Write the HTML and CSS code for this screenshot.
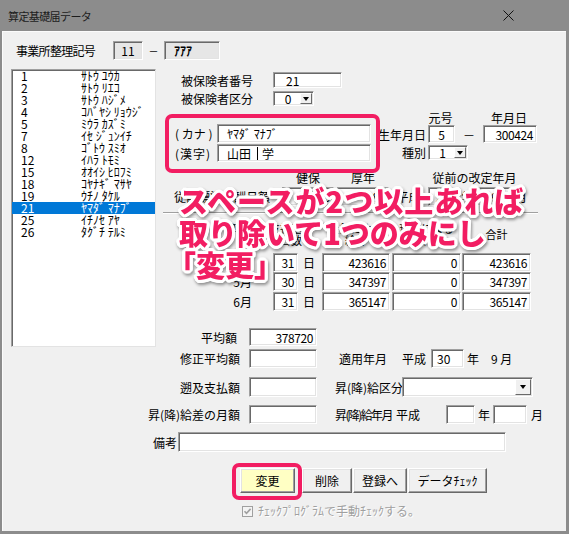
FILE: index.html
```html
<!DOCTYPE html>
<html lang="ja">
<head>
<meta charset="utf-8">
<title>算定基礎届データ</title>
<link rel="stylesheet" href="styles.css">
</head>
<body>
<div class="window">
  <div class="titlebar">
    <span class="title">算定基礎届データ</span>
    <svg class="close" width="11" height="11" viewBox="0 0 11 11"><path d="M0.5 0.5L10.5 10.5M10.5 0.5L0.5 10.5" stroke="#111" stroke-width="1" fill="none"/></svg>
  </div>
  <div class="client">
    <div class="row hdr">
      <span class="lbl hdr-label">事業所整理記号</span>
      <span class="box ro w30 cen">11</span>
      <span class="lbl cen hdr-dash">－</span>
      <span class="box ro w56 bold pl9">ｱｱｱ</span>
    </div>

    <div class="row mid">
      <div class="list">
        <div class="li"><span class="li-no">1</span><span>ｻﾄｳ ﾕｳｶ</span></div>
        <div class="li"><span class="li-no">2</span><span>ｻﾄｳ ﾘｴｺ</span></div>
        <div class="li"><span class="li-no">3</span><span>ｻﾄｳ ﾊｼﾞﾒ</span></div>
        <div class="li"><span class="li-no">4</span><span>ｺﾊﾞﾔｼ ﾘｮｳｼﾞ</span></div>
        <div class="li"><span class="li-no">5</span><span>ﾐｳﾗ ｶｽﾞﾐ</span></div>
        <div class="li"><span class="li-no">7</span><span>ｲｾ ｼﾞｭﾝｲﾁ</span></div>
        <div class="li"><span class="li-no">8</span><span>ｺﾞﾄｳ ｽﾐｵ</span></div>
        <div class="li"><span class="li-no">12</span><span>ｲﾊﾗ ﾄﾓﾐ</span></div>
        <div class="li"><span class="li-no">15</span><span>ｵｵｲｼ ﾋﾛﾌﾐ</span></div>
        <div class="li"><span class="li-no">18</span><span>ｺﾔﾅｷﾞ ﾏｻﾔ</span></div>
        <div class="li"><span class="li-no">19</span><span>ｳﾁﾉ ﾀｹﾙ</span></div>
        <div class="li sel"><span class="li-no">21</span><span>ﾔﾏﾀﾞ ﾏﾅﾌﾞ</span></div>
        <div class="li"><span class="li-no">25</span><span>ｲﾁﾉｾ ｱﾔ</span></div>
        <div class="li"><span class="li-no">26</span><span>ﾀｸﾞﾁ ﾃﾙﾐ</span></div>
      </div>

      <div class="rcol">
        <div class="row r1">
          <span class="lbl r-lbl">被保険者番号</span>
          <span class="box w69 pl12">21</span>
        </div>
        <div class="row r2">
          <span class="lbl r-lbl">被保険者区分</span>
          <span class="combo w41"><span class="combo-val">0</span><span class="combo-btn"><span class="tri"></span></span></span>
        </div>

        <div class="row r3">
          <div class="kana">
            <div class="row kana-row">
              <span class="lbl kana-lbl">( カナ )</span>
              <span class="box w154 pl9">ﾔﾏﾀﾞ ﾏﾅﾌﾞ</span>
            </div>
            <div class="row kana-row k2">
              <span class="lbl kana-lbl ls1">(漢字)</span>
              <span class="box w154 pl9">山田 <span class="caret"></span> 学</span>
            </div>
            <div class="pink pink-kana"></div>
          </div>
          <div class="birth">
            <div class="row birth-heads">
              <span class="bh1">元号</span>
              <span class="bh2">年月日</span>
            </div>
            <div class="row birth-row">
              <span class="lbl right birth-lbl">生年月日</span>
              <span class="box w27 cen">5</span>
              <span class="lbl cen w28">－</span>
              <span class="box w54 num">300424</span>
            </div>
            <div class="row birth-row b2">
              <span class="lbl right birth-lbl">種別</span>
              <span class="combo w40"><span class="combo-val">1</span><span class="combo-btn"><span class="tri"></span></span></span>
            </div>
          </div>
        </div>

        <div class="row hp-heads">
          <span class="w122"></span>
          <span class="lbl cen w52">健保</span>
          <span class="lbl cen w52 ml3">厚年</span>
          <span class="w39"></span>
          <span class="lbl cen w93">従前の改定年月</span>
        </div>
        <div class="row hp-row">
          <span class="lbl right w122 pr12">従前標準報酬月額</span>
          <span class="box w52 num">380</span>
          <span class="box w52 num ml3">380</span>
          <span class="lbl cen w39">平成</span>
          <span class="box w29 cen">29</span>
          <span class="lbl cen w20">年</span>
          <span class="box w35 cen">9</span>
          <span class="lbl pl3">月</span>
        </div>
        <div class="groove"></div>

        <div class="row th">
          <span class="th-a">算定</span>
          <span class="th-b">支払基<br>礎日数</span>
          <span class="th-c ml20 w68">金銭による<br>給与</span>
          <span class="th-c ml2 w69">現物による<br>給与</span>
          <span class="th-c ml1 w69">合計</span>
        </div>
        <div class="row tr">
          <span class="lbl right w92">4月</span>
          <span class="box w25 num ml21">31</span>
          <span class="lbl w24 pl5">日</span>
          <span class="box w68 num">423616</span>
          <span class="box w69 num ml2">0</span>
          <span class="box w69 num ml1">423616</span>
        </div>
        <div class="row tr">
          <span class="lbl right w92">5月</span>
          <span class="box w25 num ml21">30</span>
          <span class="lbl w24 pl5">日</span>
          <span class="box w68 num">347397</span>
          <span class="box w69 num ml2">0</span>
          <span class="box w69 num ml1">347397</span>
        </div>
        <div class="row tr tr3">
          <span class="lbl right w92">6月</span>
          <span class="box w25 num ml21">31</span>
          <span class="lbl w24 pl5">日</span>
          <span class="box w68 num">365147</span>
          <span class="box w69 num ml2">0</span>
          <span class="box w69 num ml1">365147</span>
        </div>

        <div class="row avg">
          <span class="lbl right w89 pr12">平均額</span>
          <span class="box w68 num">378720</span>
        </div>
      </div>
    </div>

    <div class="row lw l1">
      <span class="lbl right lw-lbl">修正平均額</span>
      <span class="box w68"></span>
      <span class="lbl w63 ml22">適用年月</span>
      <span class="lbl w29">平成</span>
      <span class="box w33 pl5">30</span>
      <span class="lbl w27 pl3">年</span>
      <span class="lbl">9 月</span>
    </div>
    <div class="row lw l2">
      <span class="lbl right lw-lbl">遡及支払額</span>
      <span class="box w68"></span>
      <span class="lbl w67 ml18">昇(降)給区分</span>
      <span class="combo w131"><span class="combo-val"></span><span class="combo-btn wide"><span class="tri"></span></span></span>
    </div>
    <div class="row lw l3">
      <span class="lbl right lw-lbl">昇(降)給差の月額</span>
      <span class="box w68"></span>
      <span class="lbl w61 ml18 tight">昇(降)給年月</span>
      <span class="lbl w50">平成</span>
      <span class="box w29"></span>
      <span class="lbl w18 pl3">年</span>
      <span class="box w34"></span>
      <span class="lbl pl4">月</span>
    </div>
    <div class="row lw l4">
      <span class="lbl right biko-lbl">備考</span>
      <span class="box w328"></span>
    </div>

    <div class="row btns">
      <span class="btn-wrap">
        <span class="btn yellow w55">変更</span>
        <span class="pink pink-btn"></span>
      </span>
      <span class="btn w50 ml7">削除</span>
      <span class="btn w54 ml1">登録へ</span>
      <span class="btn w79 ml1">データﾁｪｯｸ</span>
    </div>

    <div class="row chk">
      <svg class="chkbox" width="11" height="11" viewBox="0 0 11 11">
        <rect x="0.5" y="0.5" width="10" height="10" fill="#f4f4f4" stroke="#a0a0a0"/>
        <path d="M2.5 5.2L4.5 7.3L8.6 2.9" stroke="#a0a0a0" stroke-width="1.6" fill="none"/>
      </svg>
      <span class="chk-lbl">ﾁｪｯｸﾌﾟﾛｸﾞﾗﾑで手動ﾁｪｯｸする。</span>
    </div>

    <div class="note">
      <div class="note1">スペースが2つ以上あれば</div>
      <div>取り除いて1つのみにし</div>
      <div class="note3">「変更」</div>
    </div>
  </div>
</div>
</body>
</html>
```

FILE: styles.css
```css
* { box-sizing: border-box; }
html, body { margin: 0; padding: 0; }
body {
  font-family: "Noto Sans CJK JP", "Noto Sans", sans-serif;
  font-size: 12px;
  color: #000;
  background: #8c8c8c;
}
.window {
  width: 569px;
  height: 534px;
  background: #8c8c8c;
  display: flex;
  flex-direction: column;
  overflow: hidden;
}
.titlebar {
  flex: none;
  height: 31px;
  display: flex;
  align-items: center;
  padding-left: 8px;
  color: #1c1c1c;
}
.title { font-size: 11px; line-height: 14px; letter-spacing: -0.6px; }
.close { margin-left: auto; margin-right: 55px; display: block; }

.client {
  flex: 1;
  margin: 0 3px 3px 2px;
  background: #f0f0f0;
  border-top: 1px solid #fbfbfb;
  border-left: 1px solid #fbfbfb;
  position: relative;
  display: flex;
  flex-direction: column;
}

.row { display: flex; flex: none; }
.lbl { display: flex; align-items: center; white-space: nowrap; flex: none; }
.lbl.right { justify-content: flex-end; }
.lbl.cen { justify-content: center; }

.box {
  display: flex;
  align-items: center;
  flex: none;
  height: 100%;
  background: #fff;
  border: 1px solid;
  border-color: #a0a0a0 #fff #fff #a0a0a0;
  box-shadow: inset 1px 1px 0 #696969, inset -1px -1px 0 #e3e3e3;
  padding: 0 3px;
  white-space: nowrap;
  overflow: hidden;
}
.box.ro { background: #e6e6e6; }
.box.cen { justify-content: center; }
.box.num { justify-content: flex-end; letter-spacing: -0.4px; }
.bold { font-weight: bold; }

.combo {
  display: flex;
  flex: none;
  height: 100%;
  background: #fff;
  border: 1px solid;
  border-color: #a0a0a0 #fff #fff #a0a0a0;
  box-shadow: inset 1px 1px 0 #696969, inset -1px -1px 0 #e3e3e3;
  padding: 1px 1px 1px 2px;
}
.combo-val { flex: 1; display: flex; align-items: center; justify-content: center; }
.combo-btn {
  width: 12px;
  flex: none;
  background: #f0f0f0;
  border: 1px solid;
  border-color: #fff #696969 #696969 #fff;
  display: flex;
  align-items: center;
  justify-content: center;
}
.combo-btn.wide { width: 16px; }
.tri {
  width: 0;
  height: 0;
  border-left: 3.5px solid transparent;
  border-right: 3.5px solid transparent;
  border-top: 4px solid #000;
}

/* widths / spacing */
.w18 { width: 18px; } .w20 { width: 20px; } .w24 { width: 24px; } .w25 { width: 25px; }
.w27 { width: 27px; } .w28 { width: 28px; } .w29 { width: 29px; } .w30 { width: 30px; }
.w33 { width: 33px; } .w34 { width: 34px; } .w35 { width: 35px; } .w39 { width: 39px; }
.w40 { width: 40px; } .w41 { width: 41px; } .w50 { width: 50px; } .w52 { width: 52px; }
.w54 { width: 54px; } .w55 { width: 55px; } .w56 { width: 56px; } .w61 { width: 61px; }
.w63 { width: 63px; } .w67 { width: 67px; } .w68 { width: 68px; } .w69 { width: 69px; }
.w79 { width: 79px; } .w89 { width: 89px; } .w92 { width: 92px; } .w93 { width: 93px; }
.w122 { width: 122px; } .w131 { width: 131px; } .w154 { width: 154px; } .w328 { width: 328px; }
.ml1 { margin-left: 1px; } .ml2 { margin-left: 2px; } .ml3 { margin-left: 3px; }
.ml7 { margin-left: 7px; } .ml18 { margin-left: 18px; } .ml20 { margin-left: 20px; }
.ml21 { margin-left: 21px; } .ml22 { margin-left: 22px; }
.pl3 { padding-left: 3px; } .pl4 { padding-left: 4px; } .pl5 { padding-left: 5px; }
.pl9 { padding-left: 9px; } .pl12 { padding-left: 12px; } .pr12 { padding-right: 12px; }
.ls1 { letter-spacing: 1px; }
.tight { letter-spacing: -1.6px; }

/* header */
.hdr { height: 19px; margin-top: 9px; }
.hdr-label { width: 110px; padding-left: 13px; letter-spacing: -0.7px; }
.hdr-dash { width: 21px; font-size: 10px; }

/* middle */
.mid { margin-top: 9px; height: 278px; }
.list {
  margin-left: 8px;
  width: 145px;
  height: 278px;
  background: #fff;
  border: 1px solid;
  border-color: #a0a0a0 #e3e3e3 #e3e3e3 #a0a0a0;
  box-shadow: inset 1px 1px 0 #696969;
}
.li { display: flex; height: 12px; line-height: 12px; padding-left: 9px; white-space: nowrap; }
.li-no { width: 60px; }
.li.sel { background: #0078d7; color: #fff; }

.rcol { margin-left: 4px; width: 380px; display: flex; flex-direction: column; }
.r1 { height: 16px; margin-top: 3px; }
.r2 { height: 15px; margin-top: 3px; }
.r-lbl { width: 113px; padding-left: 21px; }

.r3 { height: 66px; }
.kana { width: 212px; padding-left: 15px; padding-top: 18px; position: relative; }
.kana-row { height: 19px; }
.kana-row.k2 { height: 18px; margin-top: 1px; }
.kana-lbl { width: 42px; }
.caret { display: inline-block; width: 1px; height: 13px; background: #000; margin: 0 4px 0 6px; }

.pink {
  position: absolute;
  border: 4px solid #f21d62;
  border-radius: 7px;
  z-index: 3;
  pointer-events: none;
}
.pink-kana { left: 5px; top: 8px; width: 215px; height: 59px; }

.birth { width: 168px; display: flex; flex-direction: column; }
.birth-heads { margin-top: 6px; height: 11px; line-height: 11px; }
.bh1 { margin-left: 55px; width: 27px; text-align: center; }
.bh2 { margin-left: 28px; width: 54px; text-align: center; }
.birth-row { height: 18px; margin-top: 2px; }
.birth-row.b2 { height: 15px; margin-top: 2px; }
.birth-lbl { width: 56px; padding-right: 2px; }

.hp-heads { height: 12px; line-height: 12px; }
.hp-row { height: 19px; margin-top: 3px; }
.groove {
  flex: none;
  margin-top: 6px;
  margin-left: 3px;
  width: 375px;
  height: 2px;
  border-top: 1px solid #a0a0a0;
  border-bottom: 1px solid #fff;
}

.th { height: 39px; align-items: center; font-size: 11px; line-height: 12px; }
.th-a { width: 92px; text-align: right; padding-right: 4px; align-self: flex-start; padding-top: 8px; }
.th-b { width: 33px; margin-left: 17px; text-align: center; }
.th-c { text-align: center; flex: none; }
.tr { height: 19px; }
.tr.tr3 { margin-top: 1px; }
.avg { height: 18px; margin-top: 17px; }

/* lower */
.l1 { height: 19px; margin-top: 2px; }
.l2 { height: 20px; margin-top: 9px; }
.l3 { height: 19px; margin-top: 8px; }
.l4 { height: 20px; margin-top: 8px; }
.lw-lbl { width: 246px; padding-right: 9px; }
.biko-lbl { width: 175px; padding-right: 1px; }

.btns { height: 25px; margin-top: 16px; padding-left: 237px; }
.btn-wrap { position: relative; display: flex; }
.btn {
  display: flex;
  align-items: center;
  justify-content: center;
  flex: none;
  height: 25px;
  background: #f0f0f0;
  border: 1px solid;
  border-color: #fff #696969 #696969 #fff;
  box-shadow: inset -1px -1px 0 #a0a0a0, inset 1px 1px 0 #e3e3e3;
  white-space: nowrap;
}
.btn.yellow { background: #ffffc4; }
.pink-btn { left: -8px; top: -5px; width: 70px; height: 37px; }

.chk { height: 12px; margin-top: 12px; padding-left: 239px; align-items: center; }
.chkbox { display: block; flex: none; }
.chk-lbl { margin-left: 5px; color: #a0a0a0; text-shadow: 1px 1px 0 #fff; white-space: nowrap; line-height: 12px; }

/* annotation */
.note {
  position: absolute;
  left: 176px;
  top: 152px;
  z-index: 5;
  font-size: 29px;
  font-weight: 900;
  line-height: 32px;
  color: #f21d62;
  white-space: nowrap;
  pointer-events: none;
  text-shadow:
    3px 0 0 #fff, -3px 0 0 #fff, 0 3px 0 #fff, 0 -3px 0 #fff,
    2px 2px 0 #fff, -2px 2px 0 #fff, 2px -2px 0 #fff, -2px -2px 0 #fff,
    3px 1px 0 #fff, -3px 1px 0 #fff, 3px -1px 0 #fff, -3px -1px 0 #fff,
    1px 3px 0 #fff, -1px 3px 0 #fff, 1px -3px 0 #fff, -1px -3px 0 #fff;
  filter: drop-shadow(1px 2px 1.5px rgba(0, 0, 0, 0.4));
}
.note1 { letter-spacing: 1px; }
.note3 { margin-left: -12px; }
```
